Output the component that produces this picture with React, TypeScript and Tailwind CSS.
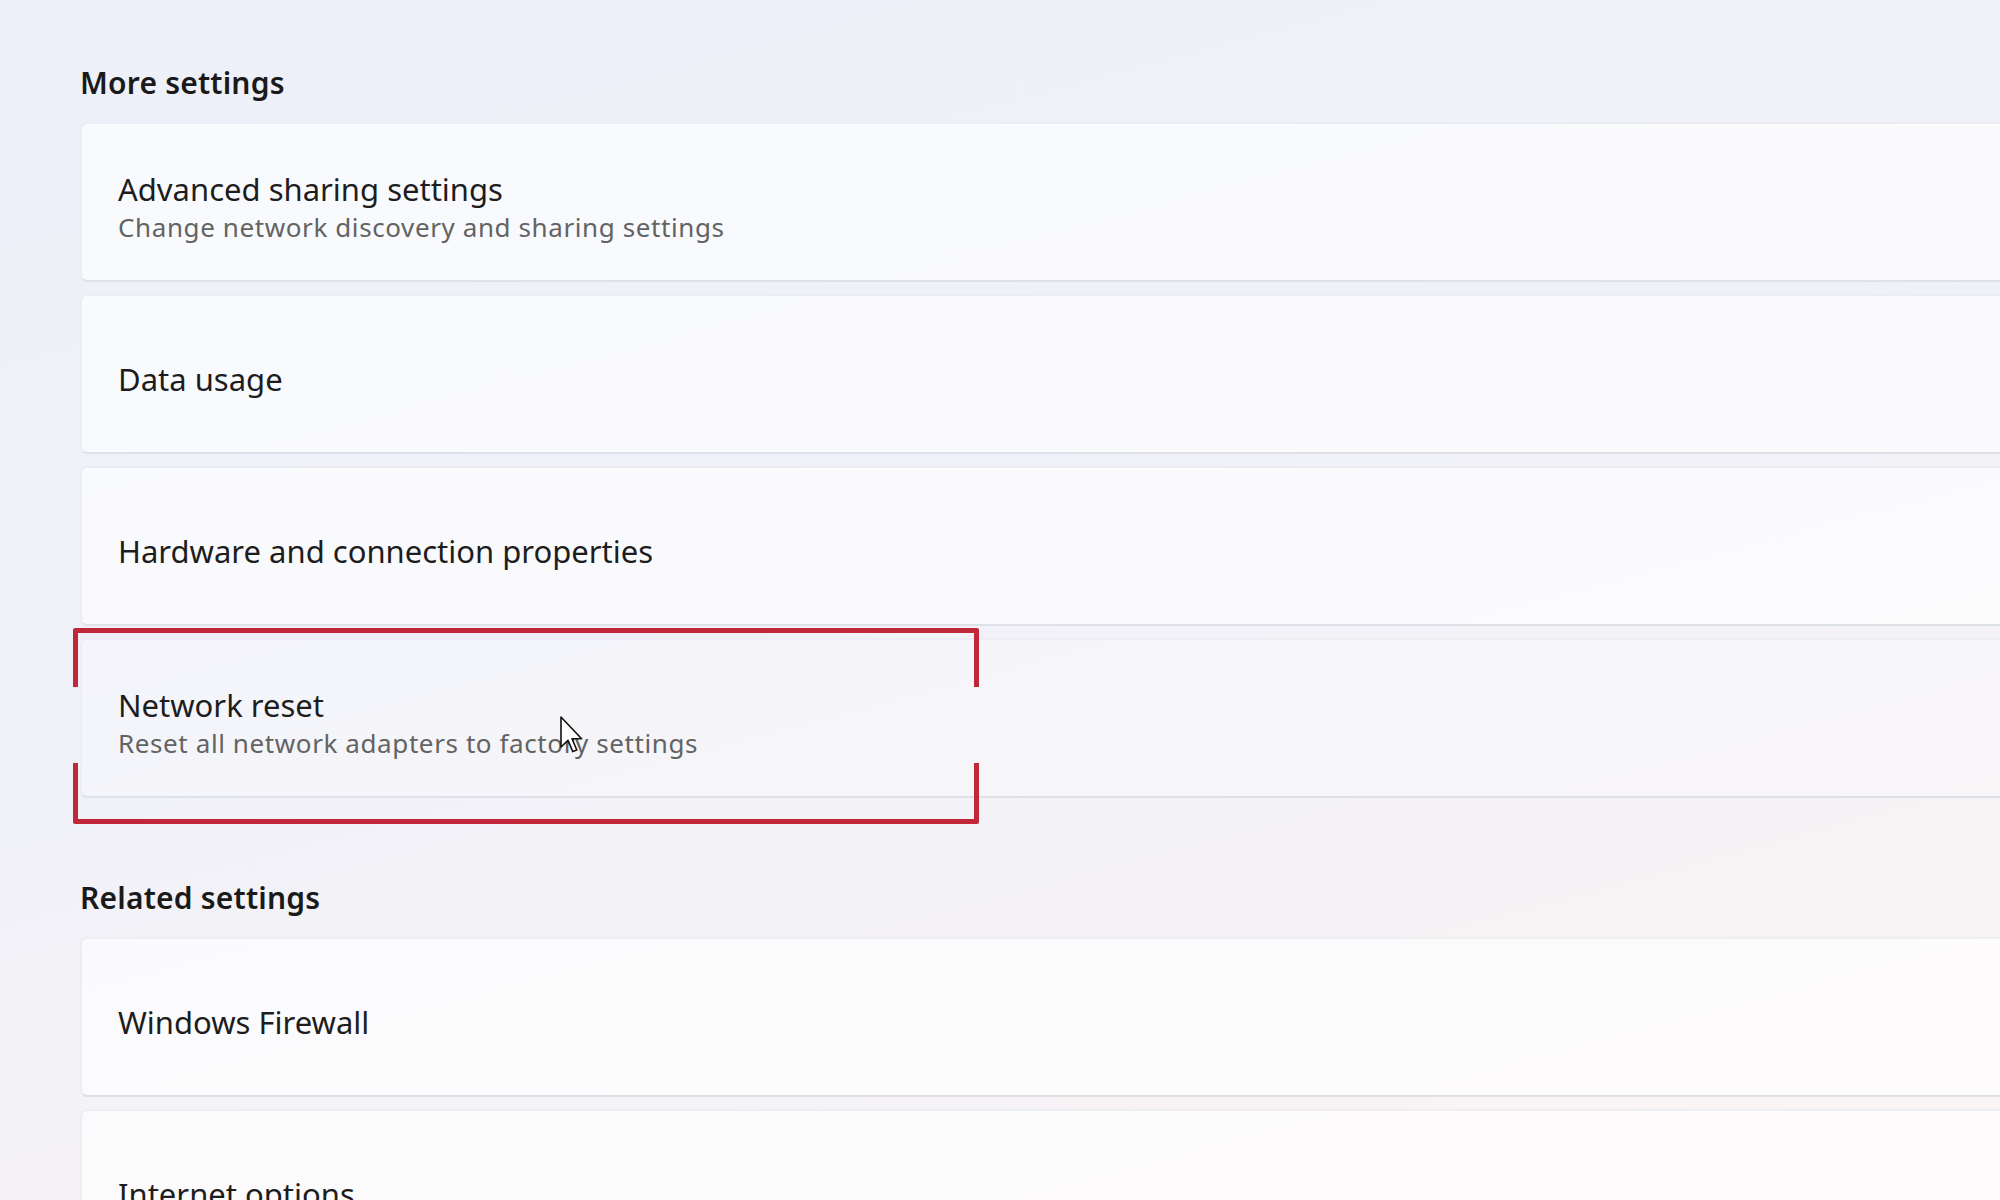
import React from "react";

type Item = { title: string; desc?: string; hover?: boolean };

const moreSettings: Item[] = [
  { title: "Advanced sharing settings", desc: "Change network discovery and sharing settings" },
  { title: "Data usage" },
  { title: "Hardware and connection properties" },
  { title: "Network reset", desc: "Reset all network adapters to factory settings", hover: true },
];

const relatedSettings: Item[] = [{ title: "Windows Firewall" }, { title: "Internet options" }];

const font = { fontFamily: '"Noto Sans", "Open Sans", Arial, sans-serif' };

const Cursor = () => (
  <svg className="absolute left-[480px] top-[78px]" width="24" height="38" viewBox="0 0 12 19">
    <path
      d="M0.5 0.5 L0.5 15.5 L4 12.2 L6.4 17.8 L8.4 17 L6 11.4 L10.8 11.4 Z"
      fill="#ffffff"
      stroke="#111111"
      strokeWidth="0.8"
      strokeLinejoin="round"
    />
  </svg>
);

const Highlight = () => (
  <div className="pointer-events-none absolute -left-[7px] -top-[10px] h-[196px] w-[906px] rounded-[2px] border-y-[5px] border-[#c0283a]">
    <div className="absolute left-0 top-0 h-[54px] w-[5px] bg-[#c0283a]" />
    <div className="absolute bottom-0 left-0 h-[56px] w-[5px] bg-[#c0283a]" />
    <div className="absolute right-0 top-0 h-[54px] w-[5px] bg-[#c0283a]" />
    <div className="absolute bottom-0 right-0 h-[56px] w-[5px] bg-[#c0283a]" />
  </div>
);

const SettingCard = ({ item }: { item: Item }) => (
  <div className="relative">
    <div
      className={`flex h-[160px] w-[2000px] items-center rounded-[7px] border-2 border-[#eceef4] border-b-[#dfe1e8] pl-[36px] pt-[10px] ${
        item.hover ? "bg-white/30" : "bg-white/65"
      }`}
    >
      <div className="flex flex-col">
        <span className="text-[31px] leading-[40px] text-[#1d1d1d]">{item.title}</span>
        {item.desc && (
          <span className="text-[26px] leading-[36px] tracking-[0.6px] text-[#636363]">{item.desc}</span>
        )}
      </div>
    </div>
    {item.hover && (
      <>
        <Highlight />
        <Cursor />
      </>
    )}
  </div>
);

const Section = ({ heading, items }: { heading: string; items: Item[] }) => (
  <section>
    <h2 className="mb-[19px] text-[30px] font-semibold leading-[40px] tracking-[0.2px] text-[#1a1a1a]">{heading}</h2>
    <div className="flex flex-col gap-[12px]">
      {items.map((item) => (
        <SettingCard key={item.title} item={item} />
      ))}
    </div>
  </section>
);

export default function App() {
  return (
    <div
      style={font}
      className="h-[1200px] w-[2000px] overflow-hidden bg-[linear-gradient(165deg,#eef0f9_0%,#f0f1f8_45%,#f6f3f6_75%,#fbf4f3_100%)] pl-[80px] pt-[63px]"
    >
      <Section heading="More settings" items={moreSettings} />
      <div className="h-[80px]" />
      <Section heading="Related settings" items={relatedSettings} />
    </div>
  );
}
